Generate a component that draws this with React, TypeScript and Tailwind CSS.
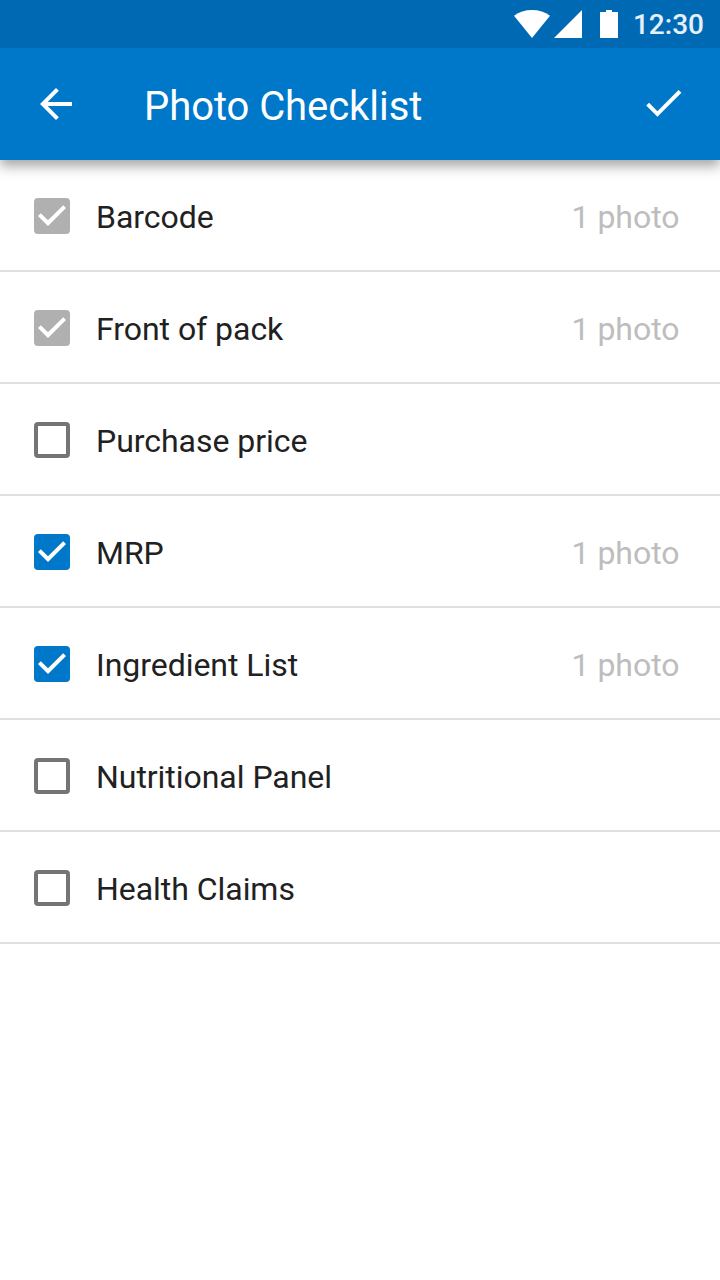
type ChecklistItem = {
  label: string;
  status: "locked" | "checked" | "empty";
  photos?: string;
};

const items: ChecklistItem[] = [
  { label: "Barcode", status: "locked", photos: "1 photo" },
  { label: "Front of pack", status: "locked", photos: "1 photo" },
  { label: "Purchase price", status: "empty" },
  { label: "MRP", status: "checked", photos: "1 photo" },
  { label: "Ingredient List", status: "checked", photos: "1 photo" },
  { label: "Nutritional Panel", status: "empty" },
  { label: "Health Claims", status: "empty" },
];

function StatusBar() {
  return (
    <div className="flex h-12 items-center justify-end bg-[#0069b4] pr-4 text-white">
      <svg className="mr-1 h-7 w-9" viewBox="0 0 36 28" fill="currentColor">
        <path d="M18 28 0 5.8C5 2 11.2 0 18 0s13 2 18 5.8z" />
      </svg>
      <svg className="mr-[18px] h-7 w-7" viewBox="0 0 28 28" fill="currentColor">
        <path d="M0 28h28V0z" />
      </svg>
      <svg className="mr-[15px] h-7 w-[18px]" viewBox="0 0 18 28" fill="currentColor">
        <path d="M0 2h6V0h6v2h6v26H0z" />
      </svg>
      <span className="pt-[2px] text-[28px] leading-8 font-medium text-white/90">12:30</span>
    </div>
  );
}

function Checkbox({ status }: { status: ChecklistItem["status"] }) {
  if (status === "empty") {
    return <span className="size-9 shrink-0 rounded-[4px] border-4 border-[#757575]" />;
  }

  return (
    <span
      className={`size-9 shrink-0 rounded-[4px] text-white ${
        status === "checked" ? "bg-[#0078c9]" : "bg-[#b0b0b0]"
      }`}
    >
      <svg className="size-9" viewBox="3 3 18 18" fill="currentColor">
        <path d="M10 17l-5-5 1.41-1.41L10 14.17l7.59-7.59L19 8z" />
      </svg>
    </span>
  );
}

export default function App() {
  return (
    <main className="h-[1280px] w-[720px] overflow-hidden bg-white font-[Roboto,sans-serif]">
      <header className="relative shadow-[0_6px_12px_rgba(0,0,0,0.36)]">
        <StatusBar />
        <div className="flex h-28 items-center bg-[#0078c9] pr-8 pl-8 text-white">
          <button aria-label="Back">
            <svg className="size-12" viewBox="0 0 24 24" fill="currentColor">
              <path d="M20 11H7.83l5.59-5.59L12 4l-8 8 8 8 1.41-1.41L7.83 13H20z" />
            </svg>
          </button>
          <h1 className="grow pt-[6px] pl-16 text-[40px] leading-12 tracking-[-0.06px]">
            Photo Checklist
          </h1>
          <button aria-label="Done">
            <svg className="size-12" viewBox="0.3 0.6 24 24" fill="currentColor">
              <path d="M9 16.17 4.83 12l-1.42 1.41L9 19 21 7l-1.41-1.41z" />
            </svg>
          </button>
        </div>
      </header>

      <ul>
        {items.map((item) => (
          <li
            key={item.label}
            className="flex h-28 items-center border-b-2 border-[#e0e0e0] pt-[2px] pr-[40.5px] pl-[34px] text-[32px] leading-10 tracking-[-0.04px]"
          >
            <Checkbox status={item.status} />
            <span className="grow pt-[2px] pl-[26px] text-[#212121]">{item.label}</span>
            {item.photos && <span className="pt-[2px] text-[#bdbdbd]">{item.photos}</span>}
          </li>
        ))}
      </ul>
    </main>
  );
}
